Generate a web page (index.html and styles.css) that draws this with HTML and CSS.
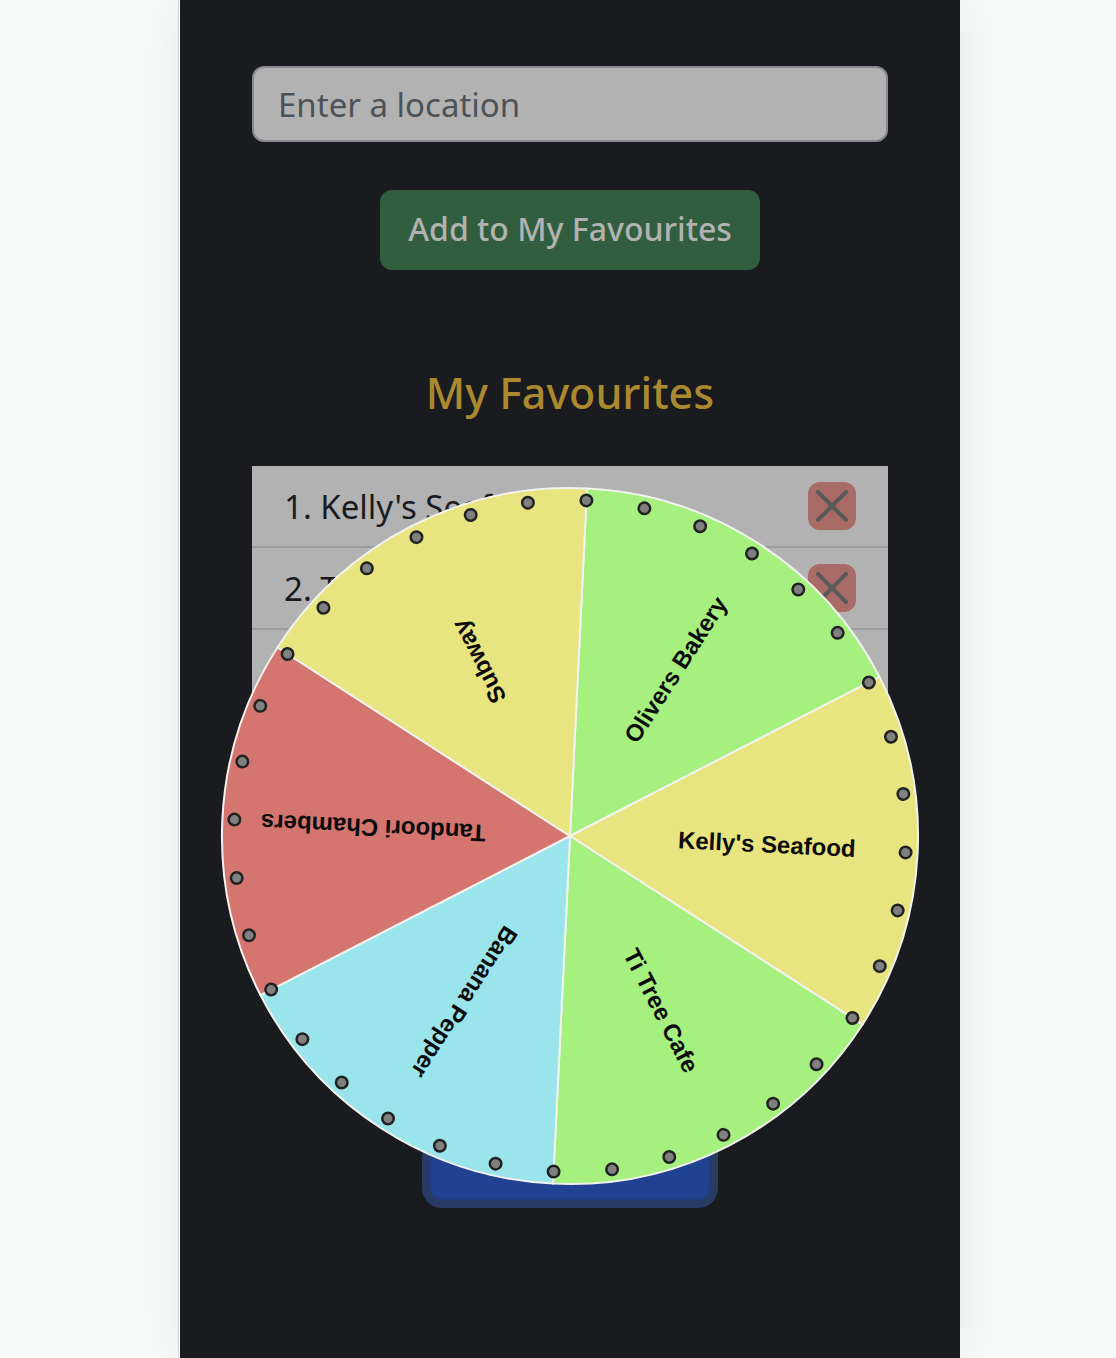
FILE: index.html
```html
<!DOCTYPE html>
<html lang="en">
<head>
  <meta charset="utf-8">
  <meta name="viewport" content="width=device-width, initial-scale=1">
  <title>My Favourites</title>
  <link rel="stylesheet" href="styles.css">
</head>
<body>
  <svg class="sprite" aria-hidden="true">
    <symbol id="cross" viewBox="0 0 32 32">
      <path d="M2 2 30 30M30 2 2 30" fill="none" stroke="currentColor" stroke-width="4" stroke-linecap="round"/>
    </symbol>
  </svg>
  <main class="card">
    <form class="add-form">
      <input class="location" type="text" placeholder="Enter a location" aria-label="Enter a location">
      <button class="add" type="button">Add to My Favourites</button>
    </form>

    <h1 class="title">My Favourites</h1>
    <ol class="list">
      <li class="row"><span>1. Kelly's Seafood</span><button class="remove" type="button" aria-label="Remove"><svg class="cross"><use href="#cross"/></svg></button></li>
      <li class="row"><span>2. Tandoori Chambers</span><button class="remove" type="button" aria-label="Remove"><svg class="cross"><use href="#cross"/></svg></button></li>
      <li class="row"><span>3. Ti Tree Cafe</span><button class="remove" type="button" aria-label="Remove"><svg class="cross"><use href="#cross"/></svg></button></li>
      <li class="row"><span>4. Banana Pepper</span><button class="remove" type="button" aria-label="Remove"><svg class="cross"><use href="#cross"/></svg></button></li>
      <li class="row"><span>5. Subway</span><button class="remove" type="button" aria-label="Remove"><svg class="cross"><use href="#cross"/></svg></button></li>
      <li class="row"><span>6. Olivers Bakery</span><button class="remove" type="button" aria-label="Remove"><svg class="cross"><use href="#cross"/></svg></button></li>
    </ol>
    <button class="spin" type="button" aria-label="Spin the wheel"></button>

    <svg class="wheel" viewBox="0 0 700 700" role="img" aria-label="Wheel of favourites">
      <g transform="rotate(2.8 350 350)">
        <g class="segments">
          <path class="green" d="M350 350V2A348 348 0 0 1 651.4 176Z"/>
          <path class="yellow" d="M350 350 651.4 176A348 348 0 0 1 651.4 524Z"/>
          <path class="green" d="M350 350 651.4 524A348 348 0 0 1 350 698Z"/>
          <path class="blue" d="M350 350V698A348 348 0 0 1 48.6 524Z"/>
          <path class="red" d="M350 350 48.6 524A348 348 0 0 1 48.6 176Z"/>
          <path class="yellow" d="M350 350 48.6 176A348 348 0 0 1 350 2Z"/>
        </g>
        <!-- pins: zero-length round dashes, one every ten degrees -->
        <circle class="pins pin-edge" cx="350" cy="350" r="336" pathLength="360"/>
        <circle class="pins pin-face" cx="350" cy="350" r="336" pathLength="360"/>
        <g class="names">
          <text x="547" y="357" transform="rotate(-60 350 350)">Olivers Bakery</text>
          <text x="547" y="357">Kelly's Seafood</text>
          <text x="547" y="357" transform="rotate(60 350 350)">Ti Tree Cafe</text>
          <text x="547" y="357" transform="rotate(120 350 350)">Banana Pepper</text>
          <text x="547" y="357" transform="rotate(180 350 350)">Tandoori Chambers</text>
          <text x="547" y="357" transform="rotate(240 350 350)">Subway</text>
        </g>
      </g>
    </svg>
  </main>
</body>
</html>
```
FILE: styles.css
```css
* {
  box-sizing: border-box;
}

body {
  margin: 0;
  padding-left: 24px;
  background: #f8faf9;
  font-family: "Lucida Grande", "Noto Sans", sans-serif;
  font-size: 33px;
}

button,
input {
  font: inherit;
}

.sprite {
  display: none;
}

.card {
  position: relative;
  display: flex;
  flex-direction: column;
  align-items: center;
  max-width: 780px;
  min-height: 100vh;
  margin: 0 auto;
  padding: 66px 72px 150px;
  background: #1a1b1e;
  box-shadow: -1px 0 #fff, -2px 0 #d0d1d7, 0 0 48px rgba(0, 0, 0, 0.07);
}

.add-form {
  display: flex;
  flex-direction: column;
  align-items: center;
  gap: 48px;
  width: 100%;
}

.location {
  width: 100%;
  height: 76px;
  padding: 0 24px;
  border: 2px solid #86898d;
  border-radius: 12px;
  background: #b2b2b2;
  color: #1a1b1e;
}

.location::placeholder {
  color: #4c5257;
  opacity: 1;
}

.add {
  height: 80px;
  padding: 0 28px 4px;
  border: 0;
  border-radius: 12px;
  background: #305e3e;
  color: #b2b2b2;
  font-size: 32px;
  font-weight: 500;
}

.title {
  margin: 94px 0 44px;
  color: #ab892f;
  font-size: 43px;
  font-weight: 500;
  line-height: 58px;
}

.list {
  width: 100%;
  margin: 0;
  padding: 0;
  background: #b2b2b2;
  color: #1a1b1e;
  list-style: none;
}

.row {
  display: flex;
  align-items: center;
  justify-content: space-between;
  height: 82px;
  padding: 0 32px;
  border-bottom: 2px solid #9c9c9c;
}

.remove {
  display: grid;
  place-items: center;
  width: 48px;
  height: 48px;
  padding: 0;
  border: 0;
  border-radius: 12px;
  background: #a96b65;
  color: #595959;
}

.cross {
  width: 32px;
  height: 32px;
}

.spin {
  width: 280px;
  height: 80px;
  margin-top: 162px;
  border: 2px solid #203d88;
  border-radius: 12px;
  background: #214191;
  box-shadow: 0 0 0 8px #273b65;
}

.wheel {
  position: absolute;
  top: 486px;
  left: 50%;
  width: 700px;
  height: 700px;
  transform: translateX(-50%);
}

.segments {
  stroke: #f2f2ee;
  stroke-width: 2;
  stroke-linejoin: round;
}

.green {
  fill: #a5f07e;
}

.yellow {
  fill: #e8e47f;
}

.blue {
  fill: #9ae4ec;
}

.red {
  fill: #d57570;
}

.pins {
  fill: none;
  stroke-dasharray: 0 10;
  stroke-linecap: round;
}

.pin-edge {
  stroke: #222;
  stroke-width: 14;
}

.pin-face {
  stroke: #808080;
  stroke-width: 9;
}

.names {
  fill: #0c0c0c;
  font-family: "Liberation Sans", Arial, sans-serif;
  font-size: 24px;
  font-weight: 700;
  text-anchor: middle;
}
```
